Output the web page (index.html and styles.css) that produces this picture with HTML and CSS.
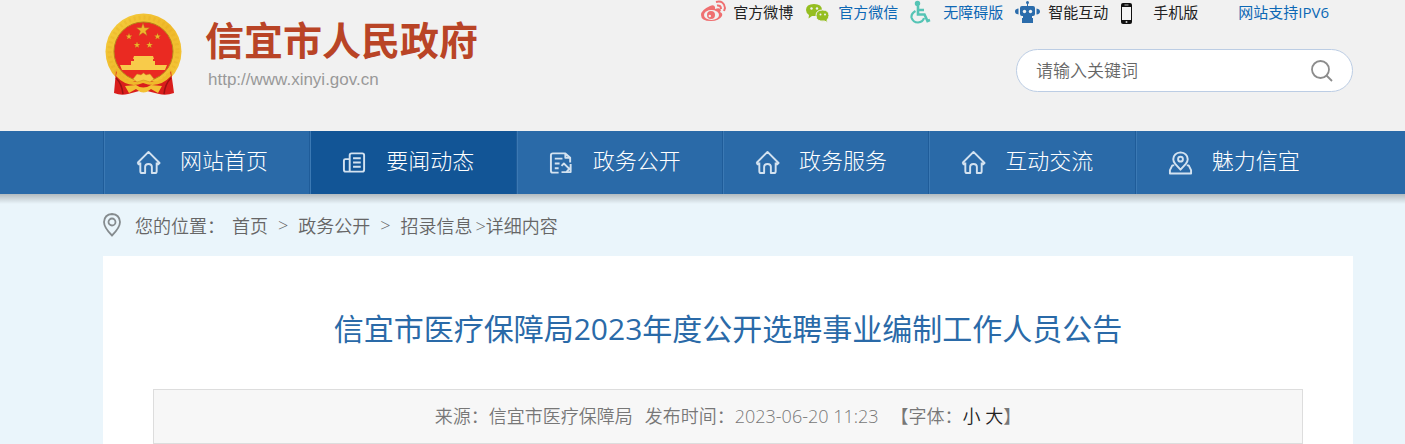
FILE: index.html
```html
<!DOCTYPE html>
<html lang="zh-CN">
<head>
  <meta charset="UTF-8">
  <meta name="viewport" content="width=device-width, initial-scale=1.0">
  <title>信宜市医疗保障局2023年度公开选聘事业编制工作人员公告</title>
  <link rel="stylesheet" href="styles.css">
</head>
<body>
  <!-- shared icons -->
  <svg class="sprite" aria-hidden="true">
    <symbol id="star" viewBox="-10 -10 20 20">
      <polygon points="0,-10 2.4,-3.2 9.5,-3.1 3.8,1.3 5.9,8.1 0,4 -5.9,8.1 -3.8,1.3 -9.5,-3.1 -2.4,-3.2"/>
    </symbol>
    <symbol id="home" viewBox="0 0 26 26">
      <path d="M1.500 13.500 L13 2 L24.500 13.500 L23 15 L21.500 13.500 M4.500 13.500 L3 15 L1.500 13.500 M4.500 13 V22 Q4.500 24 6.500 24 H9.500 V17.500 Q9.500 14.500 13 14.500 Q16.500 14.500 16.500 17.500 V24 H19.500 Q21.500 24 21.500 22 V13"/>
    </symbol>
  </svg>

  <header class="header">
    <div class="wrap header-inner">
      <a class="logo" href="#">
        <svg class="emblem" viewBox="0 0 77 83">
          <defs>
            <linearGradient id="gold" x1="0" y1="0" x2="1" y2="1">
              <stop offset="0" stop-color="#f5cf3f"/>
              <stop offset="0.5" stop-color="#efb92b"/>
              <stop offset="1" stop-color="#f6c93a"/>
            </linearGradient>
          </defs>
          <circle cx="38.500" cy="38.500" r="38" fill="url(#gold)"/>
          <circle cx="38.500" cy="38.500" r="34" fill="none" stroke="#e0a21d" stroke-width="4" stroke-dasharray="2 3" opacity=".25"/>
          <circle cx="38.500" cy="38.500" r="29.500" fill="#ea2a22" stroke="#b9831b" stroke-width="1"/>
          <g fill="#efb62c" stroke="#b0641a" stroke-width=".6">
            <use href="#star" x="31" y="10" width="14" height="14"/>
            <use href="#star" x="20.500" y="20" width="7" height="7"/>
            <use href="#star" x="49" y="20" width="7" height="7"/>
            <use href="#star" x="28.500" y="28.500" width="7" height="7"/>
            <use href="#star" x="41" y="28.500" width="7" height="7"/>
          </g>
          <path d="M29 43 H48 L49 46 H28 Z M29 46 H48 V48 H50 V52 H26 V48 H29 Z" fill="#f8cb4a"/>
          <path d="M15 52 H62 L60 57 H17 Z" fill="#f8cb4a"/>
          <path d="M11 58 Q15 66 25 70 L38 65 L52 70 Q62 66 66 58 L69 80 Q61 83 54 81 L38 77 L23 81 Q16 83 9 80 Z" fill="#d91d1c"/>
          <path d="M12 58 Q24 74 38 66 Q53 74 65 58 L66 63 Q54 76 38 70 Q23 76 11 63 Z" fill="#efb92b"/>
          <path d="M28 66 L32 61 L36 62 L38.500 60 L41 62 L45 61 L49 66 L45 69 L38.500 67 L32 69 Z" fill="#f8cb4a" stroke="#c98f1d" stroke-width=".5"/>
          <path d="M20 73 L31 72 Q38 77 46 72 L57 73 L53 80 L46 76 Q38.500 83 31 76 L24 80 Z" fill="#f3c034"/>
          <path d="M11 65 Q17 71 18 81 M66 65 Q60 71 59 81" fill="none" stroke="#9c1212" stroke-width="1.500"/>
        </svg>
        <span class="logo-text">
          <strong>信宜市人民政府</strong>
          <span class="logo-url">http://www.xinyi.gov.cn</span>
        </span>
      </a>

      <div class="header-right">
        <ul class="top-links">
          <li>
            <svg viewBox="0 0 26 24">
              <path d="M10 6 Q14 4 15 7 L15 9 Q20 7 21 10 L20 12 Q23 13 22 16 Q19 21 11 21 Q1 21 1 15 Q1 10 10 6" fill="#ef6f70"/>
              <ellipse cx="11.500" cy="15" rx="7.500" ry="5" fill="#f1f1f1"/>
              <circle cx="11" cy="15" r="4" fill="#ef6f70"/>
              <circle cx="9.800" cy="16" r="1.200" fill="#f1f1f1"/>
              <path d="M16 2 Q24 0 25 8 L24 11 M17 5.500 Q21 5 21 9" fill="none" stroke="#ef6f70" stroke-width="2"/>
            </svg>
            <a class="dark" href="#">官方微博</a>
          </li>
          <li>
            <svg viewBox="0 0 26 24">
              <path d="M9 4 Q17 4 17 10 Q11 11 11 16 H7 L3.500 18.500 L4 15 Q1 13 1 10 Q1 4 9 4" fill="#95be20"/>
              <path d="M17.500 10 Q24 10 24 15.500 Q24 18 22 20 L22.500 22.500 L19.500 21 Q11 22 11 15.500 Q11 10 17.500 10" fill="#95be20" stroke="#f1f1f1"/>
              <g fill="#f1f1f1"><circle cx="6.500" cy="8.500" r="1.200"/><circle cx="12" cy="8.500" r="1.200"/><circle cx="15.500" cy="14.500" r="1"/><circle cx="20" cy="14.500" r="1"/></g>
            </svg>
            <a href="#">官方微信</a>
          </li>
          <li>
            <svg viewBox="0 0 26 24">
              <circle cx="7.500" cy="3.500" r="2.700" fill="#55c4b5"/>
              <path d="M8 6 V14.500 H14.500 L17.500 21 L20 20 M8 10 H14" fill="none" stroke="#55c4b5" stroke-width="2.600"/>
              <path d="M5.500 11 Q1 13.500 1.500 17.500 Q3 22.500 8 22.500 Q13 22 14 18" fill="none" stroke="#55c4b5" stroke-width="2.200"/>
            </svg>
            <a href="#">无障碍版</a>
          </li>
          <li>
            <svg viewBox="0 0 26 24" fill="#2b6cab">
              <circle cx="12.500" cy="2.500" r="1.500"/>
              <path d="M12 3 H13 V6 H18 Q20 6 20 8 V14 Q20 16 18 16 H17 V18 H18 V23 H7 V18 H8 V16 H7 Q5 16 5 14 V8 Q5 6 7 6 H12 Z"/>
              <path d="M3.500 8.500 V14.500 Q0 14 0 11.500 Q0 9 3.500 8.500 M21.500 8.500 V14.500 Q25 14 25 11.500 Q25 9 21.500 8.500"/>
              <g fill="#f1f1f1"><circle cx="9.500" cy="11.500" r="1.700"/><circle cx="15.500" cy="11.500" r="1.700"/></g>
            </svg>
            <a class="dark" href="#">智能互动</a>
          </li>
          <li>
            <svg viewBox="0 0 26 24">
              <rect x="1" y="3" width="11" height="21" rx="2" fill="#111"/>
              <rect x="2" y="7" width="9" height="13" fill="#f6f6f6"/>
              <path d="M4.500 5 H8.500" stroke="#bbb"/>
              <circle cx="6.500" cy="22" r="1" fill="#ccc"/>
            </svg>
            <a class="dark" href="#">手机版</a>
          </li>
          <li class="plain"><a href="#">网站支持IPV6</a></li>
        </ul>

        <form class="search" action="#">
          <input type="text" name="keywords" placeholder="请输入关键词" aria-label="请输入关键词">
          <button type="submit" aria-label="搜索">
            <svg viewBox="0 0 22 22" fill="none" stroke="#8c8c8c" stroke-width="1.800">
              <circle cx="9.500" cy="9.500" r="8.500"/>
              <path d="M15.500 15.500 L21 21"/>
            </svg>
          </button>
        </form>
      </div>
    </div>
  </header>

  <nav class="nav">
    <ul class="wrap">
      <li><a href="#"><svg viewBox="0 0 26 26"><use href="#home"/></svg>网站首页</a></li>
      <li class="active">
        <a href="#">
          <svg viewBox="0 0 26 26">
            <path d="M8 22.500 V5.500 Q8 3.500 10 3.500 H21 Q23 3.500 23 5.500 V20.500 Q23 22.500 21 22.500 H4 Q2 22.500 2 20.500 V11 Q2 9.500 3.500 9.500 H8 M11.500 8.500 H19.500 M11.500 13 H19.500 M11.500 17.500 H19.500"/>
          </svg>要闻动态</a>
      </li>
      <li>
        <a href="#">
          <svg viewBox="0 0 26 26">
            <path d="M10 23.500 H4 Q2 23.500 2 21.500 V5.500 Q2 3.500 4 3.500 H17 L22 8 V13 M17 3.500 V8 H22 M6 9 H14 M6 14 H11 M6 19 H10"/>
            <path d="M13 16.500 L15.500 14 L18 16.500 L20.500 19 M13 23 H22.500 V14.500 M18 23 L22.500 18"/>
          </svg>政务公开</a>
      </li>
      <li><a href="#"><svg viewBox="0 0 26 26"><use href="#home"/></svg>政务服务</a></li>
      <li><a href="#"><svg viewBox="0 0 26 26"><use href="#home"/></svg>互动交流</a></li>
      <li>
        <a href="#">
          <svg viewBox="0 0 26 26">
            <path d="M13 20.500 L7.500 14.500 Q5.500 12 5.500 9.500 Q6 3 13 2.500 Q20 3 20.500 9.500 Q20.500 12 18.500 14.500 Z"/>
            <circle cx="13" cy="9.500" r="2.500"/>
            <path d="M6.500 16 H4.500 L2 21 V24.500 H24 V21 L21.500 16 H19.500"/>
          </svg>魅力信宜</a>
      </li>
    </ul>
  </nav>

  <main class="wrap">
    <div class="crumbs">
      <svg viewBox="0 0 18 24" fill="none" stroke="#858b8e" stroke-width="1.800">
        <path d="M9 22.500 Q1 14.500 1 9 Q1.500 1.500 9 1 Q16.500 1.500 17 9 Q17 14.500 9 22.500 Z"/>
        <circle cx="9" cy="9" r="3.500"/>
      </svg>
      <span class="crumbs-label">您的位置&#65306;</span>
      <a href="#">首页</a><span class="sep">&gt;</span><a href="#">政务公开</a><span class="sep">&gt;</span><a href="#">招录信息</a><span class="last">&gt;详细内容</span>
    </div>

    <article class="article">
      <h1>信宜市医疗保障局2023年度公开选聘事业编制工作人员公告</h1>
      <div class="meta">
        <span>来源&#65306;信宜市医疗保障局</span>
        <span>发布时间&#65306;2023-06-20 11:23</span>
        <span>【字体&#65306;<a href="#">小</a> <a href="#">大</a>】</span>
      </div>
    </article>
  </main>
</body>
</html>
```
FILE: styles.css
```css
* {
  box-sizing: border-box;
}

body {
  margin: 0;
  background-color: #eaf5fb;
  color: #666;
  font-family: "Open Sans", "Noto Sans CJK SC", sans-serif;
  font-size: 18px;
  font-weight: 350;
}

a {
  color: inherit;
  text-decoration: none;
}

ul {
  list-style: none;
  padding: 0;
}

.sprite {
  position: absolute;
  width: 0;
  height: 0;
}

.wrap {
  margin: 0 52px 0 103px;
}

/* header */
.header {
  background-color: #f1f1f1;
  overflow: hidden;
}

.header-inner {
  display: flex;
  justify-content: space-between;
  align-items: flex-start;
  height: 131px;
}

.logo {
  display: flex;
  gap: 23px;
  padding: 13px 0 0 2px;
}

.emblem {
  width: 77px;
  height: 83px;
}

.logo-text {
  display: flex;
  flex-direction: column;
}

.logo-text strong {
  font-size: 39px;
  line-height: 54px;
  font-weight: 700;
  color: #b94426;
}

.logo-url {
  padding-left: 3px;
  font-family: "Liberation Sans", Arial, sans-serif;
  font-size: 17px;
  line-height: 26px;
  font-weight: 400;
  color: #999;
}

.header-right {
  display: flex;
  flex-direction: column;
  align-items: flex-end;
}

.top-links {
  display: flex;
  margin: 0 24px 0 0;
  font-size: 15px;
  line-height: 24px;
  font-weight: 400;
  color: #0d68b5;
}

.top-links li {
  display: flex;
  gap: 7px;
  width: 105px;
}

.top-links li.plain {
  width: auto;
  padding-left: 13px;
}

.top-links svg {
  width: 26px;
  height: 24px;
}

.top-links .dark {
  color: #222;
}

.search {
  display: flex;
  align-items: center;
  width: 337px;
  height: 43px;
  margin-top: 25px;
  padding: 0 19px;
  background-color: #fff;
  border: 1px solid #bccde4;
  border-radius: 22px;
}

.search input {
  flex: 1;
  min-width: 0;
  padding: 0;
  border: none;
  outline: none;
  background: none;
  font: inherit;
  font-size: 17px;
}

.search input::placeholder {
  color: #666;
}

.search button {
  width: 22px;
  height: 22px;
  padding: 0;
  border: none;
  background: none;
  cursor: pointer;
}

.search svg {
  display: block;
}

/* navigation */
.nav {
  position: relative;
  background-color: #2a6aa8;
}

.nav::after {
  content: "";
  position: absolute;
  top: 100%;
  left: 0;
  right: 0;
  height: 10px;
  background: linear-gradient(rgba(0, 0, 0, 0.24), rgba(0, 0, 0, 0));
}

.nav ul {
  display: flex;
  padding-right: 12px;
}

.nav li {
  flex: 1;
  border-left: 1px solid #1f5c99;
  box-shadow: inset 1px 0 #3b79b4;
}

.nav li.active {
  background-color: #125596;
}

.nav a {
  display: flex;
  align-items: center;
  gap: 19px;
  height: 63px;
  padding: 0 0 8px 32px;
  font-size: 22px;
  font-weight: 300;
  color: #fff;
}

.nav svg {
  width: 25px;
  height: 25px;
  margin-top: 8px;
  fill: none;
  stroke: #d3e2f0;
  stroke-width: 2;
  stroke-linejoin: round;
}

/* breadcrumb */
.crumbs {
  display: flex;
  align-items: center;
  height: 62px;
}

.crumbs svg {
  width: 18px;
  height: 24px;
  margin-right: 14px;
}

.crumbs-label {
  margin-right: 7px;
}

.crumbs .sep {
  margin: 0 10px;
}

.crumbs .last {
  margin-left: 3px;
}

/* article */
.article {
  padding: 48px 50px 0;
  background-color: #fff;
}

.article h1 {
  margin: 0 0 35px;
  font-size: 30px;
  line-height: 50px;
  font-weight: 400;
  text-align: center;
  color: #2a6aa8;
}

.meta {
  display: flex;
  justify-content: center;
  gap: 12px;
  border: 1px solid #ddd;
  background-color: #f7f7f7;
  line-height: 53px;
  color: #777;
}

.meta a {
  color: #222;
}
```
